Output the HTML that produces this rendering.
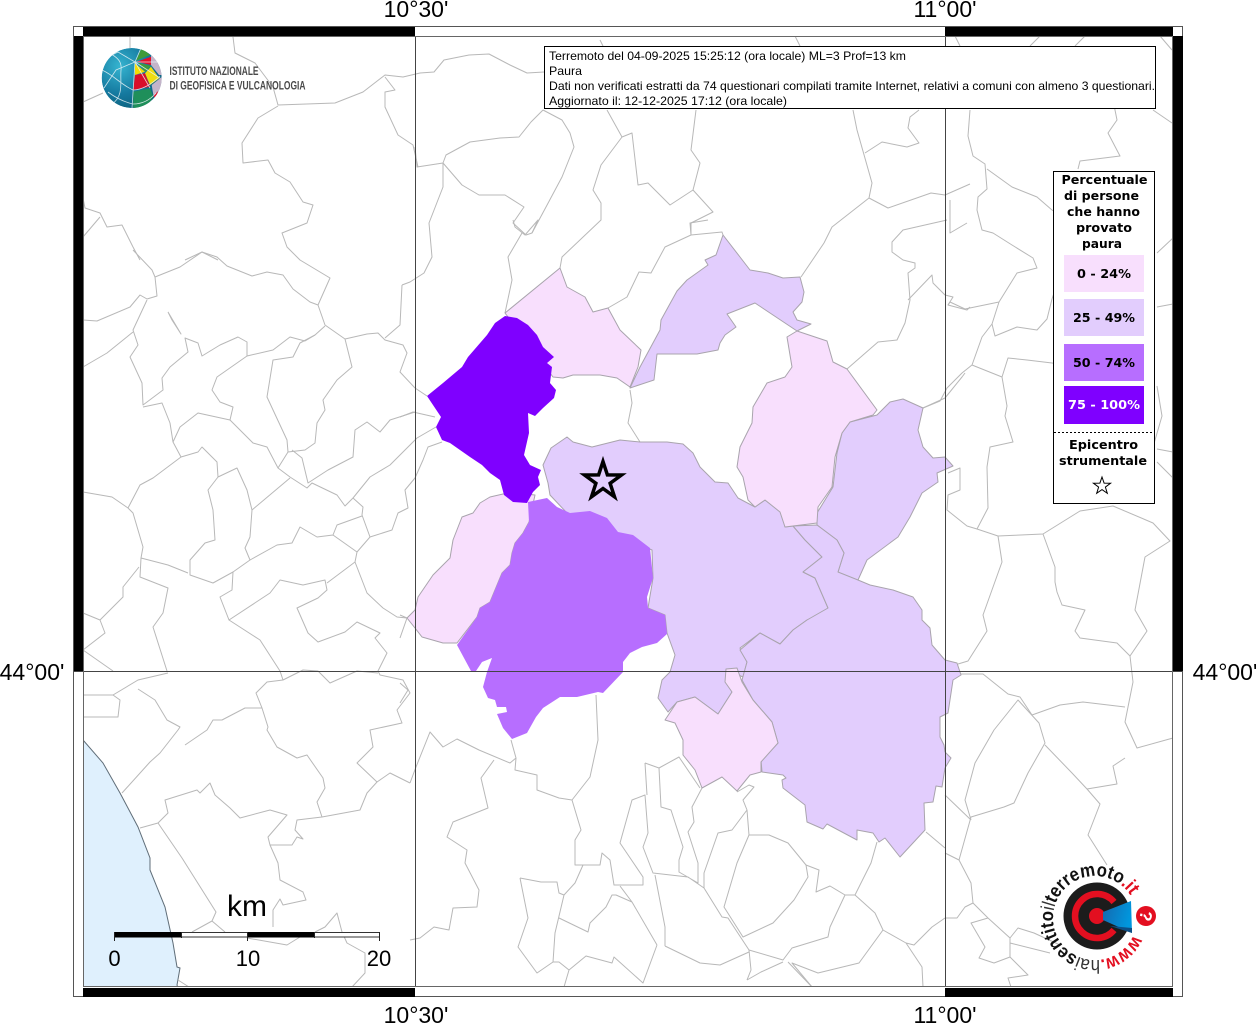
<!DOCTYPE html>
<html><head><meta charset="utf-8"><title>Paura</title>
<style>html,body{margin:0;padding:0;background:#fff}svg{display:block}</style></head>
<body>
<svg width="1256" height="1024" viewBox="0 0 1256 1024" xmlns="http://www.w3.org/2000/svg" font-family="'Liberation Sans',sans-serif">
<defs>
<clipPath id="in"><rect x="83" y="36" width="1090" height="951"/></clipPath>
<clipPath id="gl"><circle cx="131.7" cy="78" r="30"/></clipPath>
<radialGradient id="gb" cx="0.3" cy="0.3" r="0.85"><stop offset="0" stop-color="#35b4d0"/><stop offset=".55" stop-color="#15799f"/><stop offset="1" stop-color="#0a5a72"/></radialGradient>
<linearGradient id="cone" x1="0" y1="0" x2="1" y2="0.3"><stop offset="0" stop-color="#1568ae"/><stop offset="1" stop-color="#0097de"/></linearGradient>
<filter id="soft" x="0" y="0" width="100%" height="100%"><feGaussianBlur stdDeviation="0.3"/></filter>
</defs>
<rect width="1256" height="1024" fill="#fff"/>

<g clip-path="url(#in)">
<path fill="#dff0fd" stroke="#5f6d78" stroke-width="1" d="M83 740 103 763 120 793 138 827 150 858 150 870 165 907 173 943 177 967 180 968 177 985 178 988H83Z"/>
<g fill="none" stroke="#b8b8b8" stroke-width="1" stroke-linejoin="round" filter="url(#soft)">
<path d="M130 37 130 48M233 37 235 53 255 63 273 87 278 105 335 103 363 92 385 75 403 77 420 73 434 72 444 60 469 55 489 54 510 65 527 73 544 72"/>
<path d="M278 106 258 118 242 143 243 163 268 160 275 173 290 182 303 202 313 205 307 223 282 233 287 247 300 260 330 278 318 305"/>
<path d="M385 77 395 90 385 92 385 107 398 135 413 145 418 167M83 102 103 93M83 198 85 208 100 213 107 227 122 225 133 247 140 260M83 237 100 217M185 260 202 252 218 260"/>
<path d="M133 250 152 270 155 277 157 296 147 299 140 295 130 307 97 321 83 320M155 277 180 267 202 252 217 257 227 266 252 276 267 272 283 275 293 289 310 302 318 305 325 325 345 339 367 334 378 333 385 340 403 345 407 353 400 372 415 388 427 396"/>
<path d="M385 338 400 325 402 285M325 326 315 335 305 341 290 337 273 350 247 356 247 342 238 337 220 345 202 356 198 343 185 338 188 352 170 367 162 378 163 390 143 405 142 383 130 357 138 345 133 330 147 300M133 332 107 353 83 367"/>
<path d="M247 356 217 377 212 390 220 402 233 407 230 420 198 413 180 427 173 442 170 423 162 403 143 407M173 442 181 457 198 452 202 447 217 462 218 477 237 468 247 490 252 510 250 537 245 548 250 560 233 572 213 583 190 575 190 560 205 543 215 540 213 510 208 490 218 477"/>
<path d="M181 457 153 478 140 485 128 508 112 497 83 492M128 508 133 513 143 547 141 558 168 565 188 573M141 558 140 577 168 588 163 613 153 627 167 671M139 567 123 587 123 597 100 620 83 613M100 620 105 633 83 650 113 671"/>
<path d="M230 420 253 443 267 447 278 468 290 477 307 488 312 483 337 495 345 506 353 498 363 507 362 515 370 537 357 552 355 562 367 593 383 608 397 617 407 618M278 468 288 452 287 440 267 397 273 360 293 357 300 343 315 335"/>
<path d="M288 452 305 450 315 443 317 423 325 410 323 400 337 380 352 367 345 339M292 450 302 458 308 483 328 470 353 457 355 430 367 422 380 432 390 420 415 412M252 510 290 478M353 498 370 477 390 465 417 438 436 427M370 537 392 530 398 513 408 508 405 490 415 478 423 460 428 447 442 442"/>
<path d="M250 560 277 545 292 543 300 527 317 537 333 535 337 525 362 516M333 535 357 552M355 562 327 583M233 572 232 590 220 597 229 620 270 593 280 580 303 585 325 580 327 590 318 598 297 608 308 633 318 642 345 632 357 622 380 633 375 638 387 653 378 671 380 675 403 680 410 693 397 710 402 723 370 730 373 747 357 763 377 782 390 773 410 783"/>
<path d="M229 620 260 640 280 671 283 680 303 670 318 671 330 683 357 671 378 673M283 680 267 682 256 693 262 708 268 727 267 730 277 747 297 758 307 755 323 778 325 788 317 802 322 817 360 810 367 793 377 782"/>
<path d="M168 673 138 680 113 695 83 695M138 689 155 700 167 720 180 727 178 730 160 753 150 762 122 793M113 695 120 700 118 717 83 717M262 708 245 708 222 720 213 720 207 730 185 745"/>
<path d="M140 828 158 823 182 858 216 912 212 921 192 932M158 823 168 813 165 800 197 790 200 793 210 783 215 795 230 808 240 818 270 810 287 815 268 837 270 845 292 845 297 837 303 839 295 830 297 820 322 817"/>
<path d="M270 845 278 863 280 880 303 892 306 900 283 905 280 899 273 910 273 927M315 932 325 927 337 913 342 932 347 943 365 953 365 973 352 987M247 938 287 945 300 937M178 980 189 987M212 921 225 932"/>
<path d="M410 783 416 767 430 732 443 747 457 739 479 750 510 763 516 758 511 740M516 758 515 770 537 775 537 790 559 798 572 800 590 777 598 740 596 695M494 760 481 778 488 808 453 822 447 837 467 850 465 863 479 890 477 907 453 908 449 930 434 927 420 938 410 940"/>
<path d="M572 800 581 830 575 840 575 865 600 865 602 853 610 860 614 885 643 885 643 877 620 843 632 800 645 795 648 833 643 847 653 873 688 877 704 888 722 917 728 918 749 950 751 970 747 980M645 763 659 768 679 757 700 788M645 763 647 795M659 768 661 807 671 810 683 847 679 860 679 872 698 883 698 863 688 832 694 822 692 807 702 788"/>
<path d="M737 792 749 785 754 787 743 800 747 810 732 830 718 833 704 873 704 888M747 810 749 835 737 863 724 907 743 937 773 923 794 900 808 877 806 865 788 843 769 835 749 835M806 865 819 870 816 892 830 886 845 895 855 895 871 863 877 842M845 895 830 927 828 937 792 948 783 960 749 950M783 962 761 972 747 980M855 895 875 913 883 930 859 963 818 973 792 963 812 987M883 930 906 943 914 945 932 927 945 918M906 943 922 967 923 987M926 832 945 848"/>
<path d="M520 878 541 882 557 882 559 893 564 895 555 933 553 962 537 973 518 947 528 918 520 878M564 895 575 883 583 865M559 918 588 932 590 923 606 907 612 895 616 895 632 902 657 945M620 886 632 902M655 875 665 927 665 946M657 945 643 983 614 957 612 963 586 956 569 970 564 987M553 962 559 962 569 970M665 946 700 963 720 965 749 952M788 962 812 987"/>
<path d="M945 795 971 820M971 820 965 800 975 763 994 730 1018 700 1039 723 1045 743 1028 773 1014 803 1004 807 971 817 959 860 971 883 973 903 988 918 1010 938 1018 928 1034 933 1060 945M959 860 945 853M973 903 965 907 957 918 945 918M988 918 971 923 985 947 979 958 994 963 1010 957 1010 938M1010 957 1028 975 1008 978 1011 987M1010 943 1050 953"/>
<path d="M970 110 968 136 973 156 985 164 987 189 978 197 977 210 982 230 993 233 1012 245 1033 258 1037 268 1017 273 999 302 992 324 995 336 1017 327 1037 330 1047 319 1052 299M999 302 965 309 950 302 948 305M987 169 1012 187 1037 197 1052 210"/>
<path d="M992 324 982 337 972 365 962 373 947 388 940 401 923 408M972 365 1002 377 1008 358 1027 360 1052 363M1002 377 1007 406 1005 416 1013 442 990 447 987 467 988 508 977 529 998 536 1043 534 1080 511 1113 506 1153 523 1170 541 1145 557 1135 610 1147 631 1130 656 1133 682 1125 722 1137 748 1173 738"/>
<path d="M948 473 960 468 960 490 948 495 947 510 967 526 977 529M998 536 1002 562 983 615 987 631 968 661 958 664M960 674 983 674 1008 694 1020 697 1032 715 1060 705 1083 702 1125 707M1045 745 1072 773 1087 789 1117 784 1113 766 1125 758M1087 789 1100 804 1088 835 1107 865"/>
<path d="M1043 534 1055 567 1055 582 1057 592 1062 605 1085 610 1075 631 1080 638 1117 643 1130 656M1113 100 1117 120 1108 133 1120 156 1080 161 1078 169M1157 253 1173 238M1157 307 1173 304M1157 386 1162 416 1153 447M1157 449 1173 452M1157 462 1173 478M1153 110 1172 123M1052 299 1060 275M1052 363 1065 365M1052 210 1060 215"/>
<path d="M543 110 531 122 519 137 500 138 470 142 446 155 443 163 417 167 415 147M543 110 562 120 570 133 574 147 562 177 546 207 532 233 526 235 513 223 524 207 505 195 479 195 462 185 443 163M443 163 443 187 429 223 432 257 424 273 410 282 402 285"/>
<path d="M522 233 508 257 512 280 505 313M607 110 622 137 632 133 638 185 648 183 670 205 693 190 700 163 691 150 696 110M622 137 601 165 593 190 601 203 601 220 562 257 560 268M693 190 713 212 691 223 691 235 665 247 651 273 639 272 627 297 608 308M691 235 722 232 723 235"/>
<path d="M801 277 824 243 832 227 869 198 872 183 857 130 853 110M869 198 888 208 931 193 945 195 970 184M865 153 882 142 907 147 919 143 908 128 910 117 919 110M947 220 903 230 892 242 892 252 903 260 915 263 915 268 908 273 910 300 905 323 897 340 878 342 847 369"/>
<path d="M908 300 932 275 933 283 945 295 953 297 948 305 967 310 970 307M950 200 950 233 967 223M923 408 945 398 962 377 965 373M691 235 690 223 708 220"/>
<path d="M513 220 515 227 525 235 538 220 532 233M400 417 413 412 435 417M630 390 632 403 628 423 640 442M400 615 407 618 400 638M400 683 408 690 400 703"/>
<path d="M600 40 603 46M795 36 800 46M955 36 960 46M1040 36 1030 46M1085 36 1075 46M1160 36 1172 50M1120 60 1140 68"/>
<path d="M168 312 181 334 172 320 168 312"/>
</g>

<g stroke="#a9a4ad" stroke-width="1" stroke-linejoin="round">
<path fill="#f8dffd" d="M505 313 560 268 567 287 585 297 593 312 608 308 620 330 641 350 638 367 630 387 617 378 600 375 573 375 563 378 553 377Z"/>
<path fill="#f8dffd" d="M480 503 490 497 503 494 525 494 535 495 529 522 523 533 515 543 512 553 510 565 502 573 490 602 480 608 477 617 457 643 443 643 422 637 415 628 407 618 415 610 418 597 433 575 450 558 453 540 462 517 473 513Z"/>
<path fill="#e2cdfd" d="M723 235 740 257 750 270 768 273 783 278 800 277 804 292 802 302 793 312 797 320 811 324 797 331 773 315 755 303 727 314 736 327 725 335 720 343 718 350 697 354 657 354 654 380 630 388 640 367 660 330 661 320 677 291 687 280 708 265 705 260 716 255Z"/>
<path fill="#e2cdfd" d="M567 437 573 442 592 447 620 440 640 442 667 442 683 444 693 453 700 467 715 482 728 483 738 498 755 507 765 500 782 513 785 527 793 526 805 540 822 557 803 572 815 578 828 608 822 615 807 620 793 630 780 644 760 633 740 648 747 662 743 677 727 670 732 692 718 714 695 697 677 702 668 712 658 698 662 680 670 672 675 655 667 633 665 615 648 608 653 578 652 550 567 513 550 495 548 483 543 465 551 448Z"/>
<path fill="#e2cdfd" d="M850 422 877 415 890 402 903 399 923 408 918 430 923 447 933 458 945 457 953 466 937 473 938 482 922 493 910 517 898 537 867 560 858 580 840 577 838 572 844 553 837 540 817 525 817 513 833 487 837 453 842 433Z"/>
<path fill="#e2cdfd" d="M793 526 817 525 837 540 844 553 838 572 858 580 870 585 893 590 913 597 922 610 922 620 930 628 932 645 945 660 957 663 961 675 953 680 948 713 940 717 940 737 944 745 945 752 951 758 945 768 942 787 936 786 933 802 924 803 925 830 900 857 885 838 879 842 873 833 857 830 857 840 827 824 823 829 807 822 805 805 783 788 782 780 786 778 783 775 762 772 761 760 778 743 772 722 753 700 742 680 747 662 740 650 760 633 780 644 793 630 807 620 828 608 815 578 803 572 822 557 805 540Z"/>
<path fill="#f8dffd" d="M787 337 797 331 827 341 833 362 847 369 877 410 873 415 850 422 842 433 835 457 832 487 818 507 817 523 785 527 780 512 765 500 755 507 748 500 743 477 737 467 740 447 752 423 753 407 767 383 785 377 792 367Z"/>
<path fill="#f8dffd" d="M726 669 737 668 742 682 753 700 772 722 778 743 761 762 761 772 750 775 737 791 722 777 702 788 695 770 683 755 683 740 675 723 665 720 677 702 695 697 718 714 732 692 725 682Z"/>
</g>
<path fill="#b76eff" d="M528 502 547 498 557 507 570 513 590 511 607 518 618 532 633 535 650 548 653 578 647 597 648 608 665 615 667 634 657 643 642 647 630 653 623 662 623 672 603 693 598 692 577 697 560 697 543 708 536 717 527 733 512 739 503 728 497 714 507 712 506 707 497 707 495 700 488 698 483 687 487 672 492 658 482 662 476 671 471 671 457 645 477 617 480 608 490 602 502 573 510 565 512 553 515 543 523 533 529 522Z"/>
<path fill="#7f00ff" d="M505 316 517 318 528 325 537 335 543 347 554 357 547 363 552 367 551 375 550 383 556 390 554 398 543 408 535 416 528 413 529 433 524 455 530 465 541 470 538 477 540 485 533 492 527 503 513 502 504 495 500 480 490 473 482 465 470 457 450 443 442 440 436 427 441 417 427 396 443 383 462 367 468 357 487 335 495 323Z"/>
</g>

<path fill="none" stroke="#000" stroke-width="3.5" stroke-miterlimit="10" d="M603 461.5 607.4 474.9 621.5 475 610.1 483.3 614.5 496.8 603 488.5 591.5 496.8 595.9 483.3 584.5 475 598.6 474.9Z"/>

<path stroke="#444" stroke-width="1" fill="none" d="M415.5 36V987M945.5 36V987M73 671.5H1183"/>

<g>
<rect x="73.5" y="26.5" width="1109" height="970" fill="none" stroke="#555"/>
<path fill="#000" d="M83 27H415V36H83ZM945 27H1173V36H945ZM83 988H415V997H83ZM945 988H1173V997H945ZM74 36H83V671H74ZM1173 36H1183V671H1173Z"/>
<rect x="83.5" y="36.5" width="1089" height="950" fill="none" stroke="#666"/>
</g>

<!-- INGV logo -->
<g clip-path="url(#gl)">
<circle cx="131.7" cy="78" r="30" fill="url(#gb)"/>
<path fill="#3e9a3a" d="M136 60.7 141.7 48 150 55Z"/>
<path fill="#e2102c" d="M136.7 61.7 151 56.7 151 65Z"/>
<path fill="#c4b4c9" d="M151 52 162 66.7 162 75 159 75 151 65Z"/>
<path fill="#f3dc00" d="M135 63.3 145 71.7 135 75Z"/>
<path fill="#3e9a3a" d="M138.3 62.7 151 66 145 71.7Z"/>
<path fill="#efdd10" d="M145 73.3 151 66.7 159.3 78.3 150 85Z"/>
<path fill="#d80f2a" d="M135 75 145 73.3 150 86.7 133.3 90Z"/>
<path fill="#c4b4c9" d="M151.7 85 162 76.7 162 90 153.3 95Z"/>
<path fill="#e2102c" d="M153.5 96 158 91 156 99Z"/>
<path fill="#1f8f5a" d="M133.3 91.7 150 88.3 153.3 96.7 145 110 133.3 110Z"/>
<g fill="none" stroke="#e9f3f6" stroke-width=".8" opacity=".85">
<path d="M135 62 132 108M135 62 118 52 110 56M135 62 116 70 104 88M135 62 150 88M135 62 160 78M135 62H160M135 62 141 48"/>
<path d="M102 70C115 76 120 84 133 90 142 90 152 84 160 76M111 54C118 58 122 62 121 70 120 82 124 96 112 104M108 92C116 98 124 102 133 104 142 104 150 100 156 93"/>
</g>
</g>
<g fill="#4a4a4a" font-size="12" font-weight="bold" font-family="'Liberation Sans Narrow','Liberation Sans',sans-serif">
<text x="169.500" y="75" textLength="89" lengthAdjust="spacingAndGlyphs">ISTITUTO NAZIONALE</text>
<text x="169.500" y="89.500" textLength="136" lengthAdjust="spacingAndGlyphs">DI GEOFISICA E VULCANOLOGIA</text>
</g>

<!-- Info box -->
<rect x="544.500" y="46.500" width="611" height="62" fill="#fff" stroke="#000"/>
<g font-size="12" fill="#000">
<text x="549" y="60" textLength="357" lengthAdjust="spacingAndGlyphs">Terremoto del 04-09-2025 15:25:12 (ora locale) ML=3 Prof=13 km</text>
<text x="549" y="75" textLength="33" lengthAdjust="spacingAndGlyphs">Paura</text>
<text x="549" y="90" textLength="606" lengthAdjust="spacingAndGlyphs">Dati non verificati estratti da 74 questionari compilati tramite Internet, relativi a comuni con almeno 3 questionari.</text>
<text x="549" y="105" textLength="238" lengthAdjust="spacingAndGlyphs">Aggiornato il: 12-12-2025 17:12 (ora locale)</text>
</g>

<!-- Legend -->
<rect x="1053.500" y="171.500" width="101" height="332" fill="#fff" stroke="#000"/>
<rect x="1064" y="255" width="80" height="37" fill="#f8dffd"/>
<rect x="1064" y="299" width="80" height="37" fill="#e2cdfd"/>
<rect x="1064" y="344" width="80" height="37" fill="#b76eff"/>
<rect x="1064" y="386" width="80" height="38" fill="#7f00ff"/>
<line x1="1054" x2="1154" y1="432.500" y2="432.500" stroke="#000" stroke-dasharray="2 2"/>
<g font-family="'DejaVu Sans',sans-serif" font-weight="bold" font-size="12" fill="#000">
<text x="1061.500" y="184" textLength="86" lengthAdjust="spacingAndGlyphs">Percentuale</text>
<text x="1064" y="200" textLength="75" lengthAdjust="spacingAndGlyphs">di persone</text>
<text x="1067" y="216" textLength="73" lengthAdjust="spacingAndGlyphs">che hanno</text>
<text x="1076" y="232" textLength="56" lengthAdjust="spacingAndGlyphs">provato</text>
<text x="1082" y="248" textLength="40" lengthAdjust="spacingAndGlyphs">paura</text>
<text x="1077" y="278" textLength="54" lengthAdjust="spacingAndGlyphs">0 - 24%</text>
<text x="1073" y="322" textLength="62" lengthAdjust="spacingAndGlyphs">25 - 49%</text>
<text x="1073" y="367" textLength="62" lengthAdjust="spacingAndGlyphs">50 - 74%</text>
<text x="1068" y="409" textLength="72" lengthAdjust="spacingAndGlyphs" fill="#fff">75 - 100%</text>
<text x="1069" y="449" textLength="69" lengthAdjust="spacingAndGlyphs">Epicentro</text>
<text x="1059" y="465" textLength="88" lengthAdjust="spacingAndGlyphs">strumentale</text>
</g>
<path fill="#fff" stroke="#000" stroke-width="1" d="M1102 477 1104.100 483.100 1110.600 483.200 1105.400 487.100 1107.300 493.300 1102 489.600 1096.700 493.300 1098.600 487.100 1093.400 483.200 1099.900 483.100Z"/>

<!-- Scale bar -->
<g>
<rect x="114.500" y="932.500" width="265" height="4.500" fill="#fff" stroke="#333" stroke-width="1"/>
<rect x="114" y="932" width="67" height="5.500" fill="#000"/>
<rect x="247" y="932" width="67" height="5.500" fill="#000"/>
<path stroke="#222" stroke-width="1" d="M114.500 932V941M181.500 932V938M247.500 932V941M314.500 932V938M379.500 932V941"/>
</g>
<g font-size="22" fill="#000" text-anchor="middle">
<text x="114.500" y="966">0</text>
<text x="248" y="966">10</text>
<text x="379" y="966">20</text>
<text x="247" y="916" font-size="30">km</text>
</g>

<!-- Axis labels -->
<g font-size="23" fill="#000" text-anchor="middle">
<text x="416" y="17">10°30'</text>
<text x="945" y="17">11°00'</text>
<text x="416" y="1023">10°30'</text>
<text x="945" y="1023">11°00'</text>
<text x="32" y="680">44°00'</text>
<text x="1225" y="680">44°00'</text>
</g>

<!-- haisentito logo -->
<circle cx="1097" cy="916" r="33.500" fill="#1c1c1c"/>
<path fill="none" stroke="#e30f20" stroke-width="6.500" d="M1114 902A22 22 0 1 0 1114 930"/>
<circle cx="1097" cy="916" r="8" fill="#e30f20"/>
<path fill="url(#cone)" d="M1103 912 1131 901 1132 933 1103 920Z"/>
<path fill="#0d4f86" d="M1110 926 1132 933 1132 928Z"/>
<circle cx="1146" cy="916" r="10" fill="#e30f20"/>
<text transform="translate(1146 916) rotate(100)" text-anchor="middle" font-size="17" font-weight="bold" fill="#fff" y="6">?</text>
<path id="arc" fill="none" d="M1133.400 935.100A42 42 0 1 1 1130.200 895.100"/>
<text font-size="19" fill="#111" textLength="222" lengthAdjust="spacingAndGlyphs"><textPath href="#arc"><tspan fill="#e30f20" font-weight="bold">www.</tspan><tspan font-weight="normal" fill="#333">hai</tspan><tspan font-weight="bold">sentito</tspan><tspan fill="#333">il</tspan><tspan font-weight="bold">terremoto</tspan><tspan fill="#e30f20" font-weight="bold">.it</tspan></textPath></text>
</svg>
</body></html>
